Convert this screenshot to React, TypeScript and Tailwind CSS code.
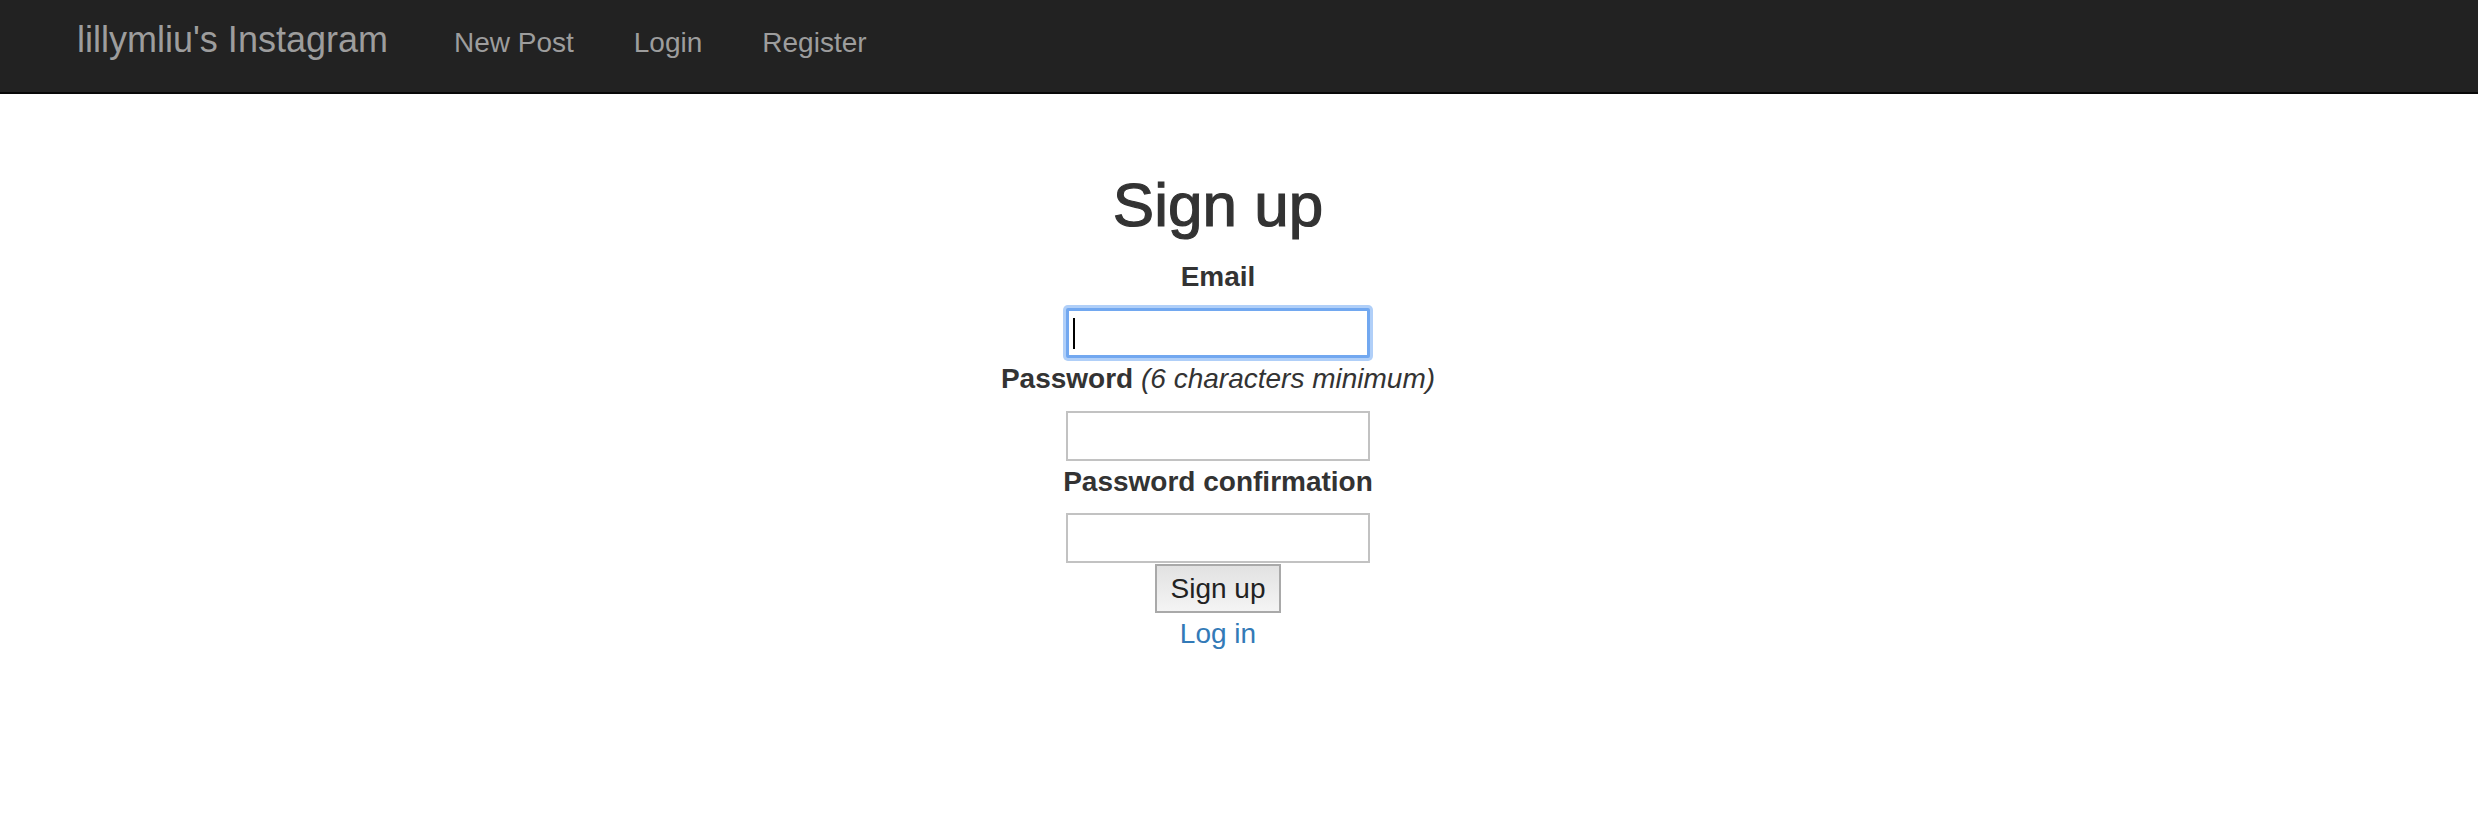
const navLinks = ['New Post', 'Login', 'Register'];

const Navbar = () => {
    return (
        <nav className="flex items-baseline h-[94px] pt-[20px] bg-[#222222] border-b-2 border-[#080808]">
            <a className="ml-[77px] mr-[36px] text-[36px] leading-[40px] text-[#9d9d9d]">lillymliu's Instagram</a>
            {navLinks.map((link) => (
                <a key={link} className="px-[30px] text-[28px] leading-[40px] text-[#9d9d9d]">{link}</a>
            ))}
        </nav>
    )
}

const TextField = ({ focused }: { focused?: boolean }) => {
    if (focused) {
        return (
            <div className="relative w-[304px] h-[50px] bg-white border-[3px] border-[#72a8f0] rounded-[2px] shadow-[0_0_0_3px_#b0cff8]">
                <span className="absolute left-[4px] top-[7px] w-[2px] h-[31px] bg-black" />
            </div>
        )
    }
    return <input type="password" className="block w-[304px] h-[50px] bg-white border-2 border-[#c2c2c2] outline-none" />
}

const App = () => {
    return (
        <div className="min-h-[816px] bg-white font-['Liberation_Sans',Arial,sans-serif] text-[#333333]">
            <Navbar />
            <div className="flex flex-col items-center pr-[42px]">
                <h2 className="mt-[77px] text-[62px] leading-[68px] [-webkit-text-stroke:1.2px_#333333]">Sign up</h2>
                <label className="mt-[18px] text-[28px] leading-[40px] font-bold">Email</label>
                <div className="mt-[11px]">
                    <TextField focused />
                </div>
                <label className="mt-px text-[28px] leading-[40px]">
                    <span className="font-bold">Password</span> <em>(6 characters minimum)</em>
                </label>
                <div className="mt-[12px]">
                    <TextField />
                </div>
                <label className="mt-px text-[28px] leading-[40px] font-bold">Password confirmation</label>
                <div className="mt-[11px]">
                    <TextField />
                </div>
                <button className="mt-px h-[49px] px-[14px] border-2 border-[#a9a9a9] bg-gradient-to-b from-[#e2e2e2] to-[#f4f4f4] text-[28px] leading-[32px] text-[#222222]">Sign up</button>
                <a className="mt-px text-[28px] leading-[40px] text-[#337ab7]">Log in</a>
            </div>
        </div>
    )
}

export default App
